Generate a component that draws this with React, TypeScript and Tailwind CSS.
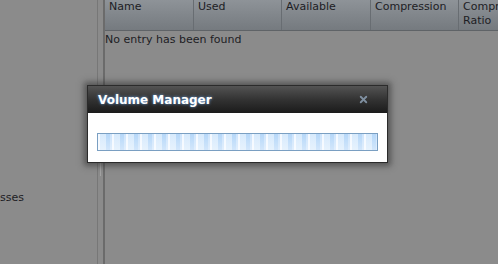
import { X } from "lucide-react";

const columns = [
  { label: "Name", w: "w-[89px]" },
  { label: "Used", w: "w-[88px]" },
  { label: "Available", w: "w-[89px]" },
  { label: "Compression", w: "w-[88px]" },
  { label: "Compression Ratio", w: "w-[60px]" },
];

export default function App() {
  return (
    <div
      className="relative w-[498px] h-[264px] overflow-hidden bg-[#8b8b8b] text-[11px] leading-[14px] text-[#1d1d24]"
      style={{ fontFamily: "'DejaVu Sans', Verdana, sans-serif" }}
    >
      <div className="flex h-full">
        {/* left tree pane (scrolled, only the tail of a label shows) */}
        <div className="w-[97px] shrink-0 flex flex-col">
          <div className="mt-[191px] pl-0 whitespace-nowrap">sses</div>
        </div>
        <div className="w-px bg-[#777777] shrink-0" />
        <div className="w-[5px] shrink-0 relative">
          <div className="absolute left-[2px] top-[163px] w-px h-[13px] bg-[#a3a3a3]" />
        </div>
        <div className="w-[2px] bg-[#6b6b6b] shrink-0" />

        {/* right grid pane */}
        <div className="flex-1 flex flex-col min-w-0">
          <div className="flex h-[31px] border-b border-[#5f6367] bg-gradient-to-b from-[#8e9398] to-[#757a7f]">
            {columns.map((c) => (
              <div
                key={c.label}
                className={`${c.w} shrink-0 border-r border-[#686d72] pl-[4px] overflow-hidden`}
              >
                {c.label}
              </div>
            ))}
          </div>
          <div className="pt-[2px]">No entry has been found</div>
        </div>
      </div>

      {/* modal dialog */}
      <div className="absolute left-[87px] top-[85px] w-[301px] border border-[#2b2b2b] shadow-[0_0_6px_3px_rgba(40,40,40,0.55)]">
        <div className="h-[27px] flex items-center justify-between px-[10px] bg-gradient-to-b from-[#545454] via-[#333333] to-[#1b1b1b]">
          <span className="text-[12px] font-bold text-white [text-shadow:0_0_3px_#6aa4e6]">
            Volume Manager
          </span>
          <X className="w-[11px] h-[11px] text-[#7f8fa0] mr-[8px]" strokeWidth={4} />
        </div>
        <div className="bg-white h-[49px] px-[9px] pt-[20px]">
          <div className="h-[18px] border border-[#7a9fc2] bg-[repeating-linear-gradient(90deg,#f2f8ff_0px,#f2f8ff_2px,#d3e8fc_2px,#d3e8fc_8px,#aed3f8_8px,#aed3f8_12px,#c8e1fb_12px,#c8e1fb_14px)]">
            <div className="h-full bg-gradient-to-b from-white/10 to-white/45" />
          </div>
        </div>
      </div>
    </div>
  );
}
